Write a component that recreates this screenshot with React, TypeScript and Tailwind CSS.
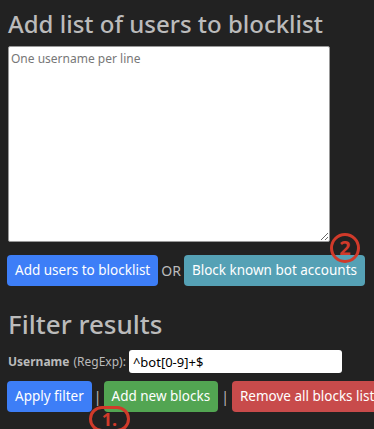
import React from 'react';

function Marker({ label, className }: { label: string; className: string }) {
  return (
    <div
      className={`absolute flex items-center justify-center rounded-full border-[3px] border-[#d03a2a] text-[#d03a2a] font-bold ${className}`}
    >
      {label}
    </div>
  );
}

const btn = 'h-[31px] shrink-0 whitespace-nowrap rounded-[4px] px-[8px] text-[13.5px] text-white';

export default function App() {
  return (
    <div className="relative h-[429px] w-[374px] overflow-hidden bg-[#222222] px-2 text-[#bbbbbb] font-['Noto_Sans',sans-serif]">
      <h2 className="pt-[8px] text-[24px] leading-[32px] font-medium">Add list of users to blocklist</h2>
      <div className="mt-[6px] relative w-[322px] h-[196px] bg-white border border-[#999] rounded-[2px]">
        <textarea
          placeholder="One username per line"
          className="w-full h-full resize-y px-[2px] py-[4px] text-[12px] leading-[16px] text-black placeholder:text-[#777] outline-none"
        />
      </div>
      <div className="mt-[13px] -ml-px flex items-center whitespace-nowrap">
        <button className={`${btn} bg-[#3d7ef7]`}>Add users to blocklist</button>
        <span className="mx-[3px] text-[14px]">OR</span>
        <button className={`${btn} bg-[#55a1b5]`}>Block known bot accounts</button>
      </div>
      <h2 className="mt-[20px] text-[26px] leading-[36px] font-medium">Filter results</h2>
      <div className="mt-[8px] flex items-center whitespace-nowrap text-[12px]">
        <b className="font-bold">Username</b>
        <span className="ml-[4px]">(RegExp):</span>
        <input
          defaultValue="^bot[0-9]+$"
          className="ml-[3px] h-[23px] w-[213px] rounded-[3px] bg-white px-[4px] text-[13px] text-black outline-none"
        />
      </div>
      <div className="mt-[8px] -ml-px flex items-center whitespace-nowrap">
        <button className={`${btn} bg-[#3d7ef7]`}>Apply filter</button>
        <span className="mx-[2px] text-[14px]">|</span>
        <button className={`${btn} bg-[#52a552]`}>Add new blocks</button>
        <span className="mx-[3px] text-[14px]">|</span>
        <button className={`${btn} bg-[#c84b4b]`}>Remove all blocks listed</button>
      </div>
      <Marker label="2" className="left-[330px] top-[233px] h-[30px] w-[30px] text-[20px]" />
      <Marker label="1." className="left-[89px] top-[406px] h-[26px] w-[41px] text-[18px]" />
    </div>
  );
}
